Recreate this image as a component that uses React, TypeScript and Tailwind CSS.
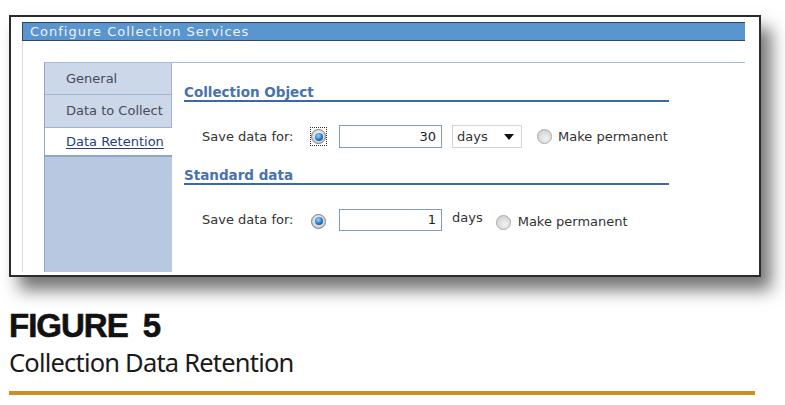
import React from "react";

function RadioOn() {
  return (
    <div className="w-[15px] h-[15px] rounded-full border border-[#7d7d7d] bg-[radial-gradient(circle_at_50%_40%,#fbfbfb,#bdbdbd)] flex items-center justify-center">
      <div className="w-[8px] h-[8px] rounded-full bg-[radial-gradient(circle_at_40%_35%,#9ad6ff,#1a6fc2_60%,#0b3c78)]" />
    </div>
  );
}

function RadioOff() {
  return (
    <div className="w-[15px] h-[15px] rounded-full border border-[#a8a8a8] bg-[radial-gradient(circle_at_60%_65%,#f2f2f2,#c9c9c9)]" />
  );
}

function Arrow() {
  return (
    <svg width="10" height="6" viewBox="0 0 10 6">
      <polygon points="0,0 10,0 5,6" fill="#111" />
    </svg>
  );
}

export default function App() {
  return (
    <div className="w-[785px] h-[405px] bg-white overflow-hidden font-['DejaVu_Sans',sans-serif] flex flex-col">
      <div className="ml-[9px] mt-[15px] w-[752px] h-[262px] shrink-0 border-2 border-[#2b2b2b] bg-white shadow-[10px_13px_16px_rgba(0,0,0,0.55)] flex flex-col pl-[11px] pr-[14px] pt-[5px] pb-[3px]">
        <div className="h-[19px] shrink-0 bg-[#5a95cf] border-y border-l border-[#34465e] pl-[7px] text-[13px] leading-[17px] text-[#eef3fa] tracking-[1px]">
          Configure Collection Services
        </div>
        <div className="flex-1 border-l border-[#dcdcdc] pl-[21px] pt-[21px] flex flex-col">
          <div className="flex-1 flex border-t border-[#a6bcdc]">
            <div className="w-[128px] shrink-0 flex flex-col bg-[#b7c8e0] border-l border-[#8fa8cd] text-[13px]">
              <div className="h-[32px] bg-[#ccd7ea] border-r border-b border-[#9fb4d4] pl-[21px] flex items-center text-[#454b57]">
                General
              </div>
              <div className="h-[33px] bg-[#ccd7ea] border-r border-b border-[#9fb4d4] pl-[21px] flex items-center text-[#454b57]">
                Data to Collect
              </div>
              <div className="h-[29px] bg-white border-b-2 border-[#8ea6ca] pl-[21px] flex items-center text-[#1f3f7a] underline underline-offset-2">
                Data Retention
              </div>
            </div>
            <div className="flex-1 pl-[12px] flex flex-col text-[13px] text-[#333]">
              <div className="mt-[21px] w-[485px] border-b-2 border-[#3b69a6] text-[13.5px] leading-[16px] font-bold text-[#4872ae]">
                Collection Object
              </div>
              <div className="mt-[23px] h-[23px] flex items-center">
                <div className="ml-[18px] w-[108px]">Save data for:</div>
                <div className="w-[29px] flex items-center">
                  <div className="w-[17px] h-[19px] border border-dotted border-[#333] flex items-center justify-center">
                    <RadioOn />
                  </div>
                </div>
                <div className="w-[103px] h-[23px] border border-[#7f9dbb] flex items-center justify-end pr-[5px] text-[#222]">
                  30
                </div>
                <div className="ml-[10px] w-[70px] h-[23px] border border-[#d4d4d4] flex items-center justify-between pl-[4px] pr-[7px]">
                  <span>days</span>
                  <Arrow />
                </div>
                <div className="ml-[15px]">
                  <RadioOff />
                </div>
                <div className="ml-[6px]">Make permanent</div>
              </div>
              <div className="mt-[19px] w-[485px] border-b-2 border-[#3b69a6] text-[13.5px] leading-[16px] font-bold text-[#4872ae]">
                Standard data
              </div>
              <div className="mt-[24px] h-[22px] flex items-center">
                <div className="ml-[18px] w-[108px]">Save data for:</div>
                <div className="w-[29px] flex items-center">
                  <div className="w-[17px] flex items-center justify-center mt-[2px]">
                    <RadioOn />
                  </div>
                </div>
                <div className="w-[103px] h-[22px] border border-[#7f9dbb] flex items-center justify-end pr-[5px] text-[#222]">
                  1
                </div>
                <div className="ml-[10px] mb-[5px]">days</div>
                <div className="ml-[13px] mt-[4px]">
                  <RadioOff />
                </div>
                <div className="ml-[7px] mt-[4px]">Make permanent</div>
              </div>
            </div>
          </div>
        </div>
      </div>
      <div className="ml-[9px] mt-[32px] font-['Liberation_Sans',Arial,sans-serif] font-bold text-[33px] leading-none tracking-[-1px] [word-spacing:7px] text-[#111] [-webkit-text-stroke:0.6px_#111]">
        FIGURE 5
      </div>
      <div className="ml-[9px] mt-[8px] font-['Noto_Sans',sans-serif] text-[25.5px] leading-none tracking-[-0.8px] text-[#1a1a1a]">
        Collection Data Retention
      </div>
      <div className="ml-[9px] mt-[15px] w-[746px] h-[4px] bg-[#c98f22]" />
    </div>
  );
}
